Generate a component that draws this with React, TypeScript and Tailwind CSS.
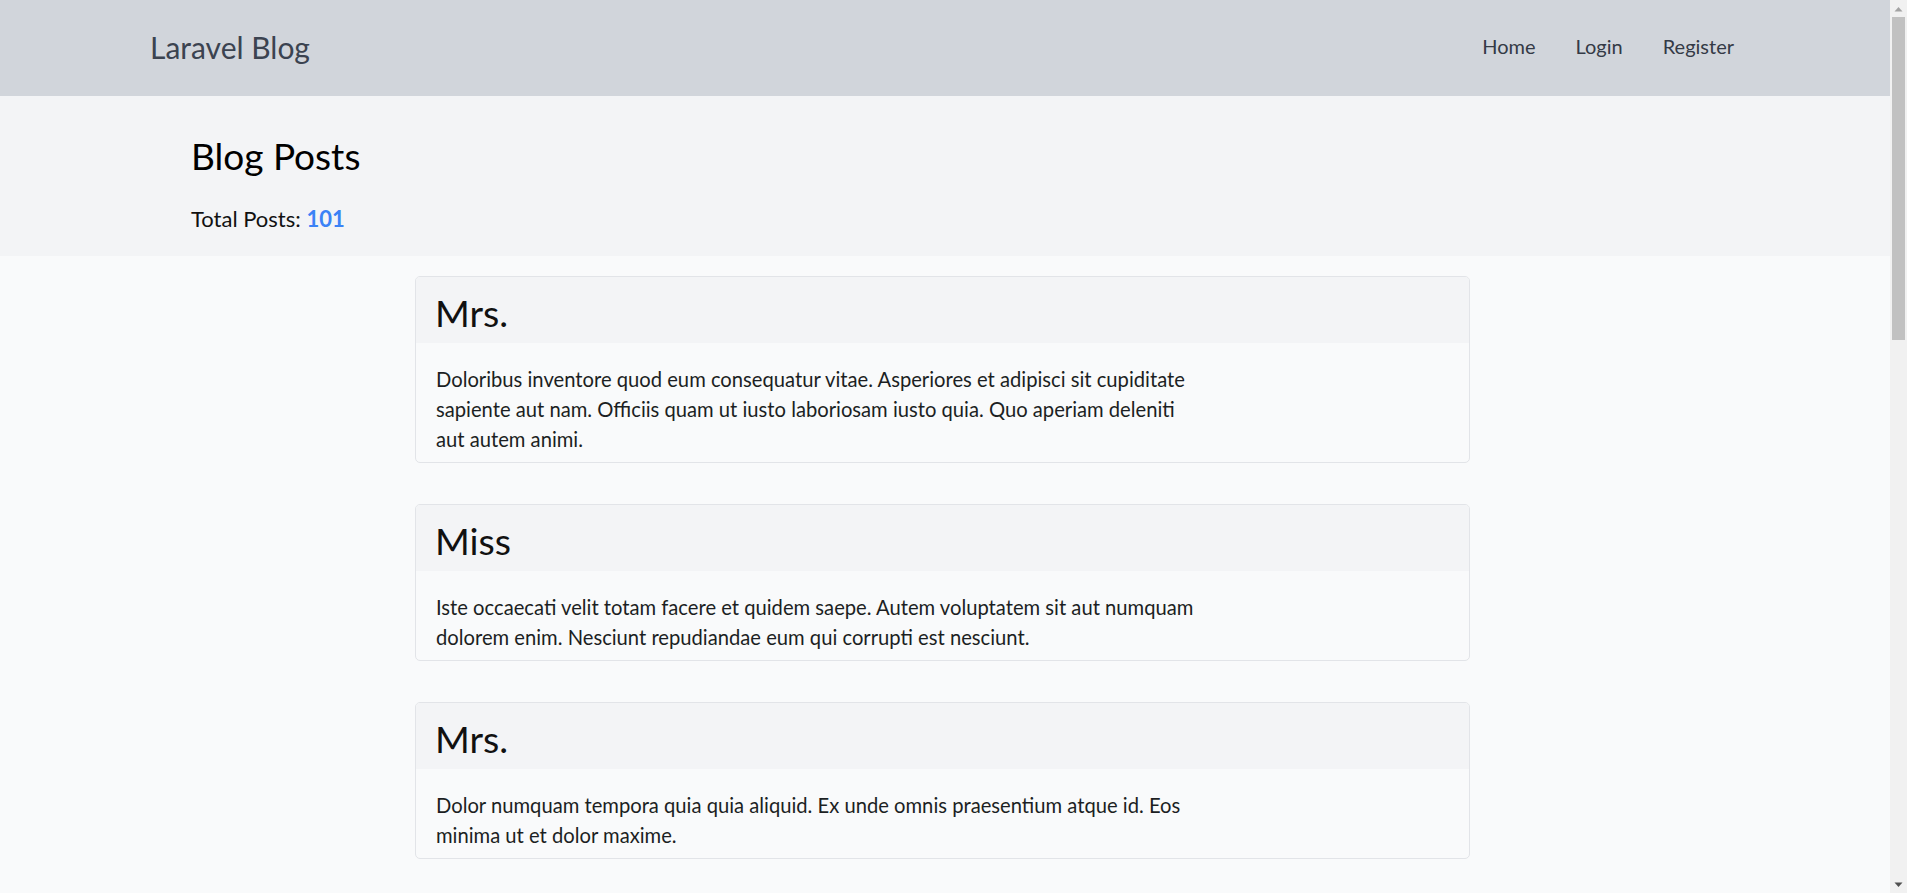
import React from "react";

type Post = { title: string; body: string };

const posts: Post[] = [
  {
    title: "Mrs.",
    body: "Doloribus inventore quod eum consequatur vitae. Asperiores et adipisci sit cupiditate sapiente aut nam. Officiis quam ut iusto laboriosam iusto quia. Quo aperiam deleniti aut autem animi.",
  },
  {
    title: "Miss",
    body: "Iste occaecati velit totam facere et quidem saepe. Autem voluptatem sit aut numquam dolorem enim. Nesciunt repudiandae eum qui corrupti est nesciunt.",
  },
  {
    title: "Mrs.",
    body: "Dolor numquam tempora quia quia aliquid. Ex unde omnis praesentium atque id. Eos minima ut et dolor maxime.",
  },
];

function Card({ post }: { post: Post }) {
  return (
    <div className="rounded-[5px] border border-[#e2e4e8]">
      <div className="rounded-t-[4px] bg-[#f3f4f6] pl-[19px] pt-[12px] pb-[6px]">
        <h2 className="text-[37.5px] leading-[48px] text-[#111111]">{post.title}</h2>
      </div>
      <div className="pl-[20px] pt-[21px] pb-[8px]">
        <p className="max-w-[765px] text-[20.2px] leading-[30px] text-[#1c1f23]">{post.body}</p>
      </div>
    </div>
  );
}

function FakeScrollbar() {
  return (
    <aside className="flex h-[893px] w-[17px] shrink-0 flex-col bg-[#f1f1f1]">
      <div className="flex h-[17px] items-center justify-center">
        <svg width="9" height="6" viewBox="0 0 9 6">
          <path d="M0.5 5.5 L4.5 1 L8.5 5.5 Z" fill="#a3a3a3" />
        </svg>
      </div>
      <div className="mx-[2px] h-[323px] bg-[#c1c1c1]" />
      <div className="flex-1" />
      <div className="flex h-[17px] items-center justify-center">
        <svg width="9" height="6" viewBox="0 0 9 6">
          <path d="M0.5 0.5 L4.5 5 L8.5 0.5 Z" fill="#505050" />
        </svg>
      </div>
    </aside>
  );
}

export default function App() {
  return (
    <div className="flex h-[893px] overflow-hidden bg-[#f9fafb] font-['Lato',sans-serif]">
      <div className="min-w-0 flex-1">
        <nav className="flex h-[96px] items-start justify-between bg-[#d1d5db] pl-[150px] pr-[156px]">
          <a className="pt-[27px] text-[30px] leading-[40px] text-[#3b4350]">Laravel Blog</a>
          <ul className="flex gap-[40px] pt-[31px] text-[20px] leading-[30px] text-[#343a46]">
            <li>Home</li>
            <li>Login</li>
            <li>Register</li>
          </ul>
        </nav>
        <header className="bg-[#f3f4f6] pl-[191px] pt-[38px] pb-[22px]">
          <h1 className="text-[37px] leading-[43px] text-black">Blog Posts</h1>
          <p className="mt-[27px] text-[22px] leading-[30px] text-[#111111]">
            Total Posts: <span className="font-bold text-[#3b82f6]">101</span>
          </p>
        </header>
        <main className="ml-[415px] flex w-[1055px] flex-col gap-[41px] pt-[20px]">
          {posts.map((p, i) => (
            <Card key={i} post={p} />
          ))}
        </main>
      </div>
      <FakeScrollbar />
    </div>
  );
}
